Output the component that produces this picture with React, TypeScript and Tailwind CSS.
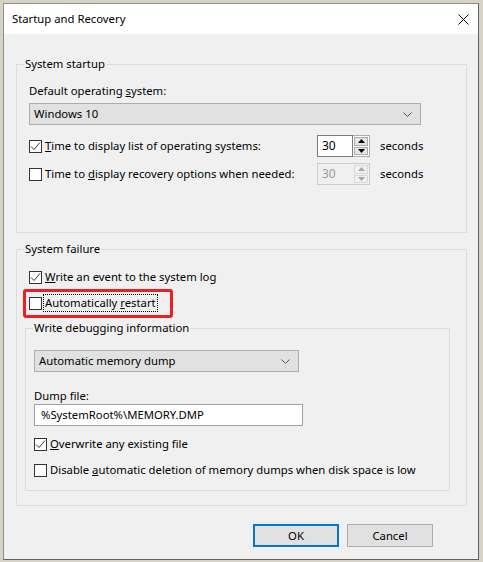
import React from 'react';

const ff = "font-['Segoe_UI','Noto_Sans',sans-serif]";

function Check({ checked }: { checked?: boolean }) {
  return (
    <span className="w-[13px] h-[13px] border border-[#333333] bg-white flex items-center justify-center shrink-0">
      {checked && (
        <svg width="11" height="11" viewBox="0 0 11 11">
          <path d="M1 5.5 L4 8.5 L10 1.5" stroke="#333333" strokeWidth="1" fill="none" />
        </svg>
      )}
    </span>
  );
}

function Row({ checked, children, className = '' }: { checked?: boolean; children: React.ReactNode; className?: string }) {
  return (
    <div className={`flex items-center h-[16px] ${className}`}>
      <Check checked={checked} />
      <span className="ml-[3px] whitespace-nowrap">{children}</span>
    </div>
  );
}

function Arrow({ up, color }: { up?: boolean; color: string }) {
  return (
    <svg width="7" height="4" viewBox="0 0 7 4">
      <path d={up ? 'M0 4 L3.5 0 L7 4 Z' : 'M0 0 L3.5 4 L7 0 Z'} fill={color} />
    </svg>
  );
}

function Spin({ disabled }: { disabled?: boolean }) {
  const btn = disabled ? 'border-[#d9d9d9] bg-[#f0f0f0]' : 'border-[#adadad] bg-[#e5e5e5]';
  return (
    <div className="flex w-[53px] h-[22px]">
      <div
        className={`w-[36px] h-full border pl-[4px] leading-[20px] text-[12px] ${
          disabled ? 'border-[#cccccc] border-r-0 bg-[#f0f0f0] text-[#9a9a9a]' : 'border-[#7a7a7a] bg-white'
        }`}
      >
        30
      </div>
      <div
        className={`flex-1 h-full border border-l-0 flex flex-col gap-[1px] p-[1px] ${
          disabled ? 'border-[#cccccc]' : 'border-[#adadad] bg-white'
        }`}
      >
        <div className={`flex-1 flex items-center justify-center border ${btn}`}>
          <Arrow up color={disabled ? '#a8a8a8' : '#000000'} />
        </div>
        <div className={`flex-1 flex items-center justify-center border ${btn}`}>
          <Arrow color={disabled ? '#a8a8a8' : '#000000'} />
        </div>
      </div>
    </div>
  );
}

function Select({ label, width }: { label: string; width: string }) {
  return (
    <div className={`${width} h-[22px] bg-[#e1e1e1] border border-[#adadad] flex items-center justify-between pl-[4px] pr-[8px]`}>
      <span>{label}</span>
      <svg width="9" height="5" viewBox="0 0 9 5">
        <path d="M0.5 0.5 L4.5 4.5 L8.5 0.5" stroke="#555555" strokeWidth="1" fill="none" />
      </svg>
    </div>
  );
}

export default function App() {
  return (
    <div className={`w-[483px] h-[562px] bg-[#d8d2c6] pt-[3px] pl-[3px] text-[11.3px] leading-[16px] text-black ${ff}`}>
      <div className="w-[476px] h-[557px] border border-[#8c8c8c] border-r-[#5f5f5f] border-b-[#5f5f5f] bg-[#f0f0f0] flex flex-col">
        <div className="h-[30px] bg-white flex items-center justify-between pl-[8px] pr-[9px]">
          <span>Startup and Recovery</span>
          <svg width="11" height="11" viewBox="0 0 11 11">
            <path d="M0.5 0.5 L10.5 10.5 M10.5 0.5 L0.5 10.5" stroke="#000000" strokeWidth="1" />
          </svg>
        </div>

        <fieldset className="ml-[12px] mt-[22px] w-[451px] border border-[#dcdcdc]">
          <legend className="ml-[7px] px-[1px]">System startup</legend>
          <div className="pl-[12px] pt-[11px] pb-[47px]">
            <div>
              Default operating <u>s</u>ystem:
            </div>
            <div className="mt-[4px]">
              <Select label="Windows 10" width="w-[392px]" />
            </div>
            <div className="mt-[10px] flex items-center">
              <div className="w-[288px]">
                <Row checked>
                  <u>T</u>ime to display list of operating systems:
                </Row>
              </div>
              <Spin />
              <span className="ml-[10px]">seconds</span>
            </div>
            <div className="mt-[6px] flex items-center">
              <div className="w-[288px]">
                <Row>
                  Time to <u>d</u>isplay recovery options when needed:
                </Row>
              </div>
              <Spin disabled />
              <span className="ml-[10px]">seconds</span>
            </div>
          </div>
        </fieldset>

        <fieldset className="ml-[12px] mt-[8px] w-[451px] border border-[#dcdcdc]">
          <legend className="ml-[7px] px-[1px]">System failure</legend>
          <div className="pl-[12px] pt-[12px] pb-[14px]">
            <Row checked>
              <u>W</u>rite an event to the system log
            </Row>
            <div className="relative mt-[10px]">
              <div className="flex items-center h-[16px]">
                <Check />
                <span className="ml-[1px] px-[1px] border border-dotted border-black leading-[16px] h-[18px] inline-block whitespace-nowrap">
                  Automatically <u>r</u>estart
                </span>
              </div>
              <div className="absolute left-[-6px] top-[-6px] w-[150px] h-[29px] border-[3px] border-[#f01e1e] rounded-[3px]" />
            </div>

            <fieldset className="ml-[-4px] mt-[9px] w-[425px] border border-[#dcdcdc]">
              <legend className="ml-[7px] px-[1px]">Write debugging information</legend>
              <div className="pl-[8px] pt-[14px] pb-[12px]">
                <Select label="Automatic memory dump" width="w-[265px]" />
                <div className="mt-[16px]">Dump file:</div>
                <div className="w-[269px] h-[22px] bg-white border border-[#a0a0a0] pl-[6px] leading-[20px]">
                  %SystemRoot%\MEMORY.DMP
                </div>
                <Row checked className="mt-[10px]">
                  <u>O</u>verwrite any existing file
                </Row>
                <Row className="mt-[10px]">
                  Disable <u>a</u>utomatic deletion of memory dumps when disk space is low
                </Row>
              </div>
            </fieldset>
          </div>
        </fieldset>

        <div className="mt-[18px] flex justify-end gap-[8px] pr-[45px]">
          <button className="w-[86px] h-[23px] bg-[#e1e1e1] border-2 border-[#0078d7]">OK</button>
          <button className="w-[86px] h-[23px] bg-[#e1e1e1] border border-[#adadad]">Cancel</button>
        </div>
      </div>
    </div>
  );
}
